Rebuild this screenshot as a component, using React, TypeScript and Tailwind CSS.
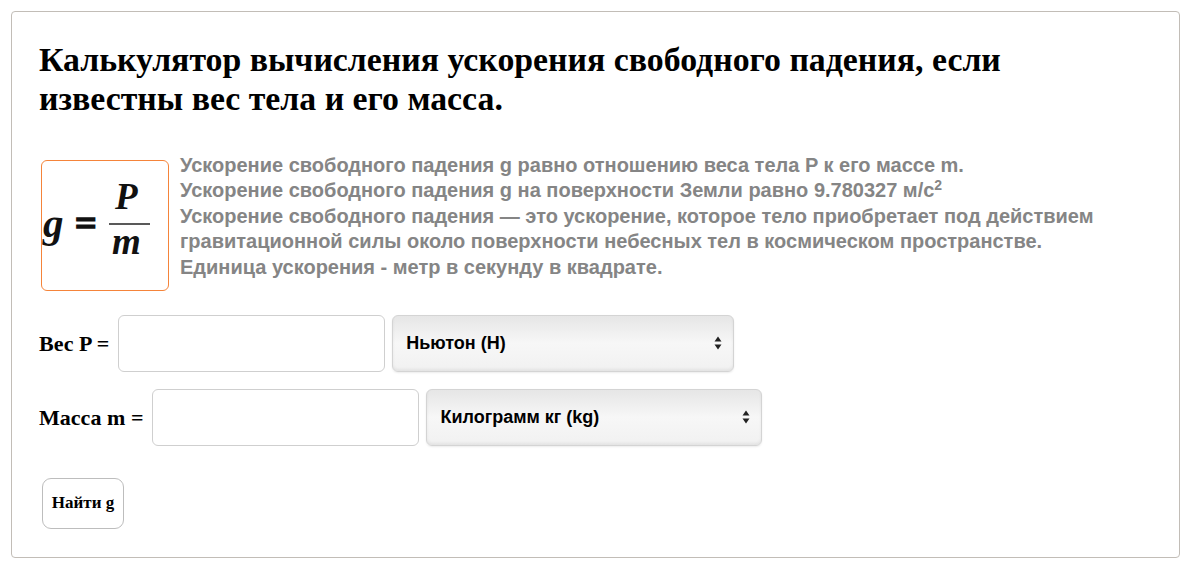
import React from "react";

function Formula() {
  return (
    <svg width="127" height="130" viewBox="0 0 127 130" className="block">
      <text x="1" y="76" fontFamily="'Liberation Serif', serif" fontStyle="italic" fontWeight="bold" fontSize="41" fill="#111">g</text>
      <text x="33" y="75" fontFamily="'Liberation Serif', serif" fontWeight="bold" fontSize="38" fill="#111" stroke="#111" strokeWidth="1.6">=</text>
      <line x1="67" y1="63" x2="108" y2="63" stroke="#222" strokeWidth="1.6" />
      <text x="73" y="48" fontFamily="'Liberation Serif', serif" fontStyle="italic" fontWeight="bold" fontSize="37" fill="#111">P</text>
      <text x="70" y="93" fontFamily="'Liberation Serif', serif" fontStyle="italic" fontWeight="bold" fontSize="37" fill="#111">m</text>
    </svg>
  );
}

function Select({ label, w }: { label: string; w: string }) {
  return (
    <div
      className={`${w} h-[57px] ml-[7px] rounded-[6px] border border-[#d4d4d4] bg-gradient-to-b from-[#e6e6e6] via-[#f7f7f7] to-[#f1f1f1] shadow-[inset_0_-2px_3px_rgba(0,0,0,0.06),0_1px_2px_rgba(0,0,0,0.08)] flex items-center justify-between pl-[13px] pr-[11px]`}
    >
      <span className="font-['Liberation_Sans',Arial,sans-serif] font-bold text-[18px] text-black">{label}</span>
      <svg width="8" height="14" viewBox="0 0 8 14">
        <path d="M4 0.5 L7.5 5.5 L0.5 5.5 Z" fill="#222" />
        <path d="M4 13.5 L7.5 8.5 L0.5 8.5 Z" fill="#222" />
      </svg>
    </div>
  );
}

export default function App() {
  return (
    <div className="w-[1200px] h-[580px] bg-white pt-[11px] pl-[11px]">
      <div className="w-[1169px] h-[547px] border-[1.5px] border-[#c2bdb7] rounded-[4px] pl-[27px] pt-[27.5px]">
        <h1 className="font-['Liberation_Serif',serif] font-bold text-[33.8px] leading-[39px] text-black">
          Калькулятор вычисления ускорения свободного падения, если
          <br />
          известны вес тела и его масса.
        </h1>
        <div className="flex mt-[35px]">
          <div className="mt-[7px] ml-[2px] w-[128px] h-[131px] border-[1.5px] border-[#f5843a] rounded-[6px] shrink-0 overflow-hidden">
            <Formula />
          </div>
          <p className="ml-[11px] whitespace-nowrap font-['Liberation_Sans',Arial,sans-serif] font-bold text-[20px] leading-[25.5px] text-[#858585]">
            Ускорение свободного падения g равно отношению веса тела P к его массе m.
            <br />
            Ускорение свободного падения g на поверхности Земли равно 9.780327 м/с
            <sup className="text-[14px] leading-none">2</sup>
            <br />
            Ускорение свободного падения — это ускорение, которое тело приобретает под действием
            <br />
            гравитационной силы около поверхности небесных тел в космическом пространстве.
            <br />
            Единица ускорения - метр в секунду в квадрате.
          </p>
        </div>
        <div className="flex items-center mt-[24px]">
          <span className="font-['Liberation_Serif',serif] font-bold text-[22px] text-black mr-[9px]">Вес P =</span>
          <div className="w-[267px] h-[57px] border border-[#cfcfcf] rounded-[6px] bg-white" />
          <Select label="Ньютон (Н)" w="w-[342px]" />
        </div>
        <div className="flex items-center mt-[17px]">
          <span className="font-['Liberation_Serif',serif] font-bold text-[22px] text-black mr-[9px]">Масса m =</span>
          <div className="w-[267px] h-[57px] border border-[#cfcfcf] rounded-[6px] bg-white" />
          <Select label="Килограмм кг (kg)" w="w-[336px]" />
        </div>
        <button className="mt-[32px] ml-[3px] w-[82px] h-[51px] border border-[#bdbdbd] rounded-[9px] bg-white font-['Liberation_Serif',serif] font-bold text-[17px] text-black">
          Найти g
        </button>
      </div>
    </div>
  );
}
